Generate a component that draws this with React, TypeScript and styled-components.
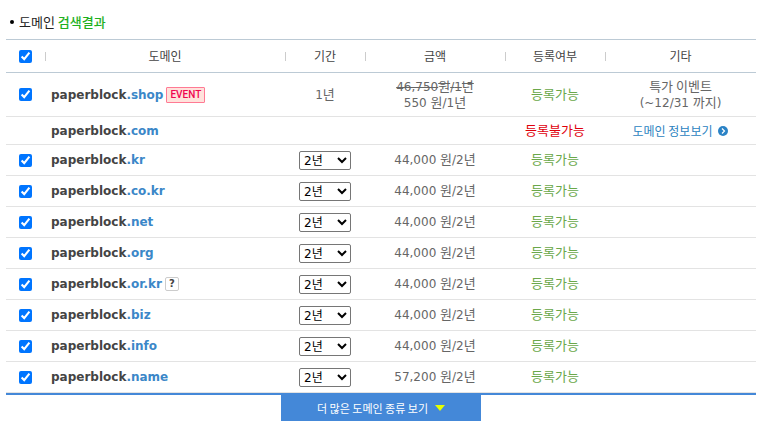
import React, { useState } from "react";
import styled, { createGlobalStyle } from "styled-components";

const GlobalStyle = createGlobalStyle`
  * { box-sizing: border-box; }
  body {
    margin: 0;
    background: #fff;
    color: #666;
    font-family: "DejaVu Sans", "Noto Sans CJK KR", sans-serif;
    font-size: 12px;
    line-height: 16px;
  }
`;

const Page = styled.main`
  padding: 12px 14px 6px 6px;
`;

const Title = styled.h1`
  display: flex;
  align-items: center;
  gap: 5px;
  height: 20px;
  margin: 0 0 7px;
  padding-left: 4px;
  color: #222;
  font-family: "Noto Sans CJK KR", sans-serif;
  font-size: 13px;
  font-weight: 400;
  line-height: 20px;

  &::before {
    content: "";
    width: 4px;
    height: 4px;
    border-radius: 2px;
    background: #000;
  }
`;

const Accent = styled.span`
  color: #1fb01f;
  font-weight: 500;
`;

const Table = styled.table`
  width: 100%;
  table-layout: fixed;
  border-collapse: separate;
  border-spacing: 0;
  border-top: 1px solid #bccad5;
  border-bottom: 2px solid #4488d8;
`;

const Col = styled.col<{ $width?: number }>`
  width: ${(p) => (p.$width ? `${p.$width}px` : "auto")};
`;

const HeadCell = styled.th<{ $divided?: boolean }>`
  height: 33px;
  padding: 0;
  border-bottom: 1px solid #bccad5;
  background: ${(p) =>
    p.$divided ? "linear-gradient(#ccc, #ccc) left center / 1px 9px no-repeat" : "none"};
  color: #444;
  font-family: "Noto Sans CJK KR", sans-serif;
  font-weight: 400;
  text-align: center;
`;

const Row = styled.tr<{ $height: number }>`
  height: ${(p) => p.$height}px;
`;

const Cell = styled.td`
  padding: 0;
  border-bottom: 1px solid #e3e3e3;
  text-align: center;
  vertical-align: middle;
`;

const DomainCell = styled(Cell)`
  padding-left: 6px;
  text-align: left;
`;

const Check = styled.input`
  display: block;
  width: 13px;
  height: 13px;
  margin: 0 auto;
`;

const Domain = styled.label`
  display: flex;
  align-items: center;
  gap: 3px;
  color: #444;
  font-weight: 700;
`;

const Tld = styled.span`
  color: #3b87c8;
`;

const EventBadge = styled.span`
  height: 16px;
  padding: 0 3px;
  border: 1px solid #ff7a94;
  border-radius: 1px;
  background: #ffe2dc;
  color: #f0054f;
  font: 500 10px/14px Roboto, sans-serif;
`;

const HelpButton = styled.button`
  width: 14px;
  height: 14px;
  padding: 0;
  border: 1px solid #ccc;
  border-radius: 2px;
  background: #fff;
  color: #444;
  font: 700 10px/12px "DejaVu Sans", sans-serif;
`;

const Korean = styled.span`
  font-family: "Noto Sans CJK KR", sans-serif;
  font-size: 13px;
  line-height: 0;
`;

const Line = styled.div`
  height: 16px;
`;

const OldPrice = styled.del`
  display: block;
  height: 16px;
`;

const PeriodSelect = styled.select`
  display: block;
  width: 52px;
  height: 19px;
  margin: 0 auto;
  padding: 1px 0 0;
  border: 1px solid #767676;
  border-radius: 2px;
  background: #fff;
  color: #000;
  font-family: "DejaVu Sans", "Noto Sans CJK KR", sans-serif;
  font-size: 12px;
`;

const Status = styled(Korean)<{ $available: boolean }>`
  color: ${(p) => (p.$available ? "#6aa84a" : "#e0000c")};
`;

const InfoLink = styled.a`
  display: flex;
  align-items: center;
  justify-content: center;
  gap: 6px;
  color: #2b83bf;
  font-family: "Noto Sans CJK KR", sans-serif;
  text-decoration: none;
`;

const MoreButton = styled.button`
  display: flex;
  align-items: center;
  justify-content: center;
  gap: 7px;
  width: 200px;
  height: 26px;
  margin: 0 auto;
  padding: 0;
  border: 0;
  background: #4488d8;
  color: #fff;
  font-family: "Noto Sans CJK KR", sans-serif;
  font-size: 11px;
`;

type Item = {
  tld: string;
  price?: string;
  kind?: "event" | "taken";
  help?: boolean;
};

const items: Item[] = [
  { tld: ".shop", price: "550", kind: "event" },
  { tld: ".com", kind: "taken" },
  { tld: ".kr", price: "44,000" },
  { tld: ".co.kr", price: "44,000" },
  { tld: ".net", price: "44,000" },
  { tld: ".org", price: "44,000" },
  { tld: ".or.kr", price: "44,000", help: true },
  { tld: ".biz", price: "44,000" },
  { tld: ".info", price: "44,000" },
  { tld: ".name", price: "57,200" },
];

const heights = { event: 44, taken: 28, normal: 31 };
const headings = ["도메인", "기간", "금액", "등록여부", "기타"];

function Price({ amount, years }: { amount: string; years: string }) {
  return (
    <>
      {amount}
      <Korean>원</Korean>/{years}
      <Korean>년</Korean>
    </>
  );
}

function ArrowIcon() {
  return (
    <svg width="10" height="10" viewBox="0 0 10 10" aria-hidden="true">
      <circle cx="5" cy="5" r="5" fill="#2b83c6" />
      <path d="M4 2.5 6.5 5 4 7.5" fill="none" stroke="#fff" strokeWidth="1.2" />
    </svg>
  );
}

function DomainRow({
  item,
  checked,
  onToggle,
}: {
  item: Item;
  checked: boolean;
  onToggle: () => void;
}) {
  const [years, setYears] = useState("2");
  const id = `domain${item.tld}`;
  const taken = item.kind === "taken";
  const event = item.kind === "event";
  return (
    <Row $height={heights[item.kind ?? "normal"]}>
      <Cell>
        {!taken && <Check type="checkbox" id={id} checked={checked} onChange={onToggle} />}
      </Cell>
      <DomainCell>
        <Domain as={taken ? "span" : "label"} htmlFor={taken ? undefined : id}>
          <span>
            paperblock<Tld>{item.tld}</Tld>
          </span>
          {event && <EventBadge>EVENT</EventBadge>}
          {item.help && <HelpButton type="button">?</HelpButton>}
        </Domain>
      </DomainCell>
      <Cell>
        {event && (
          <Line>
            1<Korean>년</Korean>
          </Line>
        )}
        {!item.kind && (
          <PeriodSelect
            aria-label={`paperblock${item.tld} 기간`}
            value={years}
            onChange={(e) => setYears(e.target.value)}
          >
            <option value="1">1년</option>
            <option value="2">2년</option>
            <option value="3">3년</option>
          </PeriodSelect>
        )}
      </Cell>
      <Cell>
        {event && (
          <OldPrice>
            <Price amount="46,750" years="1" />
          </OldPrice>
        )}
        {item.price && (
          <Line>
            <Price amount={`${item.price} `} years={event ? "1" : "2"} />
          </Line>
        )}
      </Cell>
      <Cell>
        <Line>
          <Status $available={!taken}>{taken ? "등록불가능" : "등록가능"}</Status>
        </Line>
      </Cell>
      <Cell>
        {event && (
          <>
            <Line>
              <Korean>특가 이벤트</Korean>
            </Line>
            <Line>
              (~12/31 <Korean>까지</Korean>)
            </Line>
          </>
        )}
        {taken && (
          <InfoLink href="#info">
            도메인 정보보기
            <ArrowIcon />
          </InfoLink>
        )}
      </Cell>
    </Row>
  );
}

export default function App() {
  const [selected, setSelected] = useState(() => items.map((i) => i.kind !== "taken"));
  const all = items.every((item, i) => item.kind === "taken" || selected[i]);
  return (
    <>
      <GlobalStyle />
      <Page>
        <Title>
          <span>
            도메인 <Accent>검색결과</Accent>
          </span>
        </Title>
        <Table>
          <colgroup>
            <Col $width={39} />
            <Col />
            <Col $width={80} />
            <Col $width={140} />
            <Col $width={100} />
            <Col $width={151} />
          </colgroup>
          <thead>
            <tr>
              <HeadCell>
                <Check
                  type="checkbox"
                  aria-label="전체 선택"
                  checked={all}
                  onChange={() => setSelected(items.map((i) => i.kind !== "taken" && !all))}
                />
              </HeadCell>
              {headings.map((h) => (
                <HeadCell key={h} $divided>
                  {h}
                </HeadCell>
              ))}
            </tr>
          </thead>
          <tbody>
            {items.map((item, i) => (
              <DomainRow
                key={item.tld}
                item={item}
                checked={selected[i]}
                onToggle={() => setSelected(selected.map((s, j) => (j === i ? !s : s)))}
              />
            ))}
          </tbody>
        </Table>
        <MoreButton type="button">
          더 많은 도메인 종류 보기
          <svg width="10" height="6" viewBox="0 0 10 6" aria-hidden="true">
            <path d="M0 0h10L5 6z" fill="#e4ff00" />
          </svg>
        </MoreButton>
      </Page>
    </>
  );
}
